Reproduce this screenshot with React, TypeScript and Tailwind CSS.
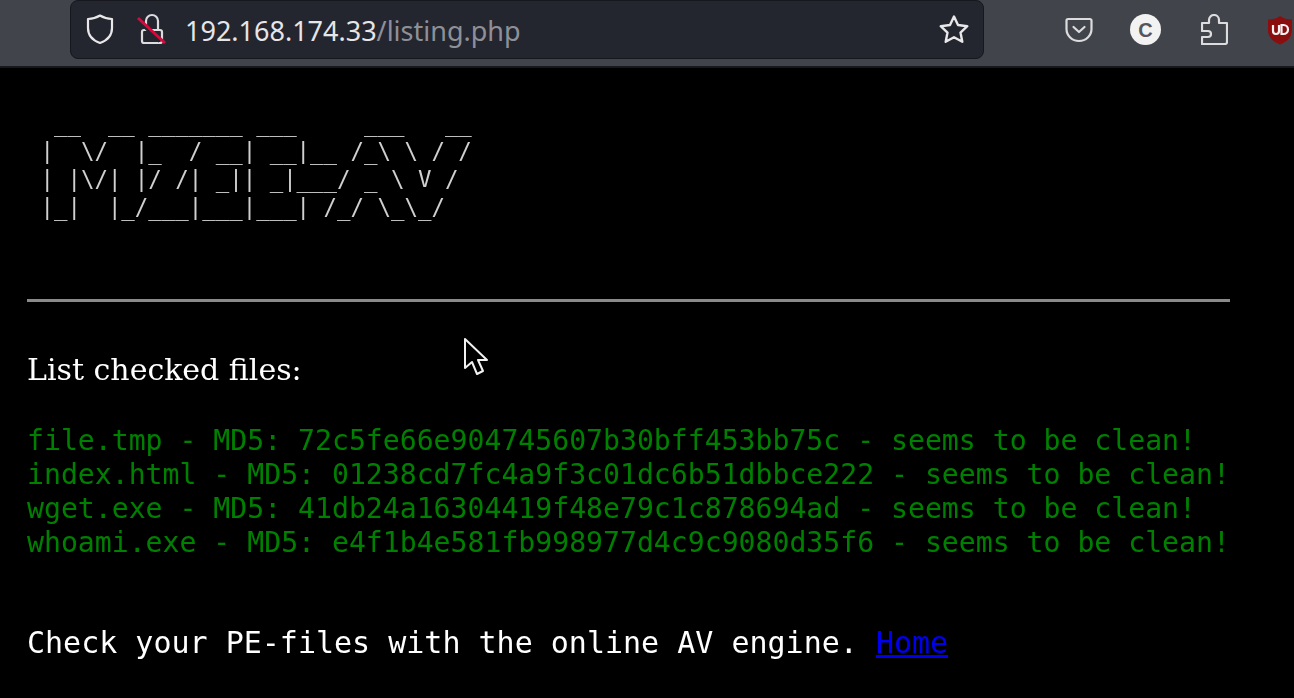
const art = [
  "  __  __ _______ ___     ___   __",
  " |  \\/  |_  / __| __|__ /_\\ \\ / /",
  " | |\\/| |/ /| _|| _|___/ _ \\ V /",
  " |_|  |_/___|___|___| /_/ \\_\\_/",
].join("\n");

const files = [
  "file.tmp - MD5: 72c5fe66e904745607b30bff453bb75c - seems to be clean!",
  "index.html - MD5: 01238cd7fc4a9f3c01dc6b51dbbce222 - seems to be clean!",
  "wget.exe - MD5: 41db24a16304419f48e79c1c878694ad - seems to be clean!",
  "whoami.exe - MD5: e4f1b4e581fb998977d4c9c9080d35f6 - seems to be clean!",
];

function ToolbarIcons() {
  return (
    <div className="flex items-center shrink-0 ml-[81px] mb-[7px]">
      {/* Pocket */}
      <svg width="28" height="26" viewBox="0 0 28 26" fill="none" stroke="#dcdcde" strokeWidth="2.2" strokeLinecap="round" strokeLinejoin="round" className="shrink-0">
        <path d="M3 2h22a1.500 1.500 0 0 1 1.500 1.500V12a12.500 12 0 0 1-25 0V3.500A1.500 1.500 0 0 1 3 2z" />
        <path d="M8.500 10l5.500 5 5.500-5" />
      </svg>
      {/* Container / account avatar */}
      <div className="shrink-0 ml-[37px] w-[31px] h-[31px] rounded-full bg-[#f2f2f2] flex items-center justify-center text-[#55565c] text-[20px] font-bold font-['Liberation_Sans',sans-serif]">
        C
      </div>
      {/* Extensions */}
      <svg width="27" height="31" viewBox="0 0 27 31" fill="none" stroke="#dcdcde" strokeWidth="2.2" strokeLinejoin="round" className="shrink-0 ml-[40px]">
        <path d="M1 9h7V6a5 5 0 0 1 10 0v3h8v19a2 2 0 0 1-2 2H1v-7h6a3 3 0 0 0 0-6H1z" />
      </svg>
      {/* uBlock */}
      <svg width="26" height="30" viewBox="0 0 26 30" className="shrink-0 ml-[39px]">
        <path d="M13 1c3.500 2.500 7 3.500 12 3.500V15c0 7-4.500 11.500-12 14.500C5.500 26.500 1 22 1 15V4.500C6 4.500 9.500 3.500 13 1z" fill="#8b0e0e" />
        <path d="M6 10v6a3 3 0 0 0 6 0v-6M14.500 10v9h2a4.500 4.500 0 0 0 0-9z" fill="none" stroke="#f4f4f4" strokeWidth="2.200" />
      </svg>
    </div>
  );
}

function Toolbar() {
  return (
    <div className="h-[68px] shrink-0 bg-[#42444c] flex items-center overflow-hidden pl-[70px] border-b-[2px] border-[#17181c]">
      <div className="shrink-0 w-[914px] h-[59px] mb-[8px] rounded-[8px] bg-[#23252f] border border-[#17181d] flex items-center pl-[14px] pr-[13px]">
        <svg width="30" height="32" viewBox="0 0 30 32" fill="none" stroke="#e8e8ea" strokeWidth="2.200" strokeLinejoin="round">
          <path d="M15 2.500c3.500 2.200 7 3.300 12 3.500v9c0 8-5 12.500-12 15-7-2.500-12-7-12-15V6c5-.2 8.500-1.300 12-3.500z" />
        </svg>
        <svg width="29" height="32" viewBox="0 0 29 32" fill="none" className="ml-[22px]">
          <path d="M9 17V8a6 6 0 0 1 12 0v9" stroke="#dcdcde" strokeWidth="2.200" />
          <rect x="5" y="17" width="20" height="13" rx="2" stroke="#dcdcde" strokeWidth="2.200" />
          <path d="M0 6l23 22" stroke="#23252f" strokeWidth="4" />
          <path d="M1 5l27 25" stroke="#d70a3c" strokeWidth="3" />
        </svg>
        <div className="ml-[19px] pt-[2px] flex-1 text-[27px] leading-none text-[#e6e6e8] font-['Noto_Sans',sans-serif]">
          192.168.174.33<span className="text-[#8f9097]">/listing.php</span>
        </div>
        <svg width="32" height="30" viewBox="0 0 32 30" fill="none" stroke="#e8e8ea" strokeWidth="2.400" strokeLinejoin="round">
          <path d="M16 2.500l4 8.500 9.300 1.200-6.800 6.400 1.800 9.200-8.300-4.600-8.300 4.600 1.800-9.200-6.800-6.400 9.300-1.200z" />
        </svg>
      </div>
      <ToolbarIcons />
    </div>
  );
}

export default function App() {
  return (
    <div className="relative w-[1294px] h-[698px] overflow-hidden bg-black flex flex-col">
      <Toolbar />
      <main className="px-[27px] flex flex-col blur-[0.5px]">
        <pre className="mt-[41px] text-[22.4px] leading-[28px] text-[#d0d0d0] font-['DejaVu_Sans_Mono',monospace]">{art}</pre>
        <hr className="mt-[78px] w-[1203px] border-0 h-[3px] bg-[#8a8a8a]" />
        <p className="mt-[48px] text-[30px] leading-[40px] text-white font-['DejaVu_Serif',serif]">List checked files:</p>
        <div className="mt-[34px] text-[28.15px] leading-[34px] text-[#008000] font-['DejaVu_Sans_Mono',monospace] whitespace-pre">
          {files.map((f) => (
            <div key={f}>{f}</div>
          ))}
        </div>
        <p className="mt-[66px] text-[30px] leading-[34px] text-white font-['DejaVu_Sans_Mono',monospace] whitespace-pre">
          {"Check your PE-files with the online AV engine. "}
          <a href="#" className="text-[#0000ee] underline">Home</a>
        </p>
      </main>
      {/* mouse pointer caught in the screenshot */}
      <svg width="26" height="40" viewBox="0 0 26 40" className="absolute left-[463px] top-[337px]" fill="#000" stroke="#f2f2f2" strokeWidth="2" strokeLinejoin="round">
        <path d="M2 2v29l7-6 5 12 6-3-5-11h9z" />
      </svg>
    </div>
  );
}
